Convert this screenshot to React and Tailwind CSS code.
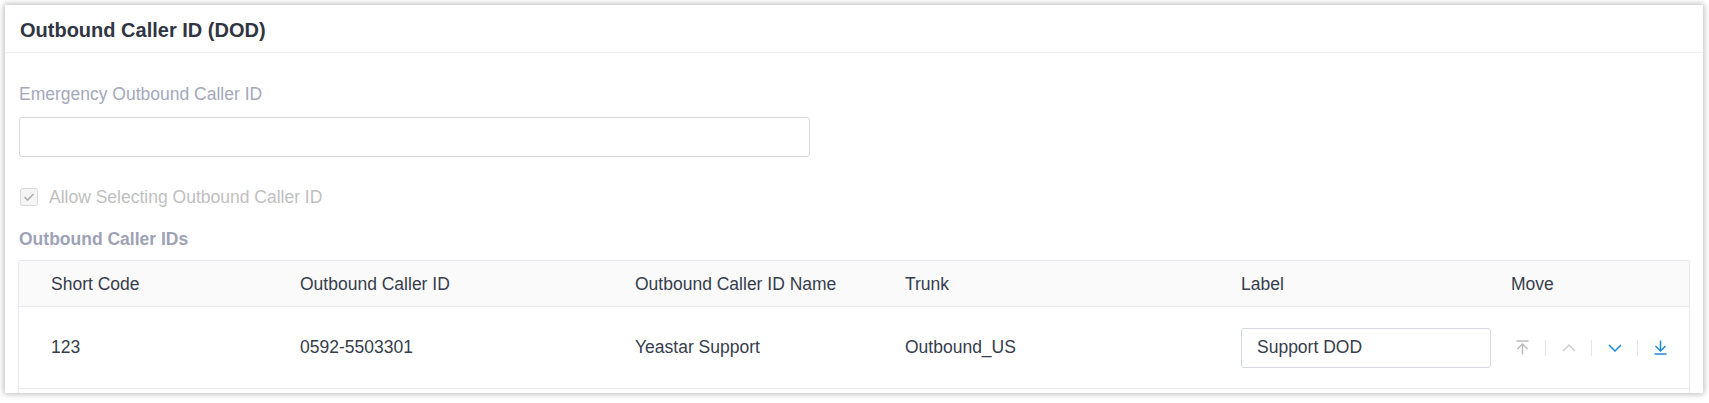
import { useState } from "react";

const columns = [
  { key: "code", title: "Short Code", width: "w-[261px] pl-[32px]" },
  { key: "callerId", title: "Outbound Caller ID", width: "w-[335px] pl-5" },
  { key: "name", title: "Outbound Caller ID Name", width: "w-[270px] pl-5" },
  { key: "trunk", title: "Trunk", width: "w-[336px] pl-5" },
  { key: "label", title: "Label", width: "w-[270px] pl-5" },
  { key: "move", title: "Move", width: "flex-1 pl-5" },
];

const rows = [
  { code: "123", callerId: "0592-5503301", name: "Yeastar Support", trunk: "Outbound_US", label: "Support DOD" },
];

export default function App() {
  return (
    <div className="h-[403px] w-[1709px] overflow-hidden bg-white font-['Liberation_Sans',Arial,sans-serif] text-[17.5px]">
      <section className="m-[5px] h-[388px] w-[1698px] overflow-hidden bg-white shadow-[0_0_6px_1px_rgba(0,0,0,0.28)]">
        <header className="flex h-[48px] items-center border-b border-[#eef0f3] px-[15px] pt-[2px]">
          <h1 className="text-[20px] font-bold text-[#2f3542]">Outbound Caller ID (DOD)</h1>
        </header>

        <div className="px-[14px] pt-[30px]">
          <label className="block leading-[22px] text-[#a4a8ba]">Emergency Outbound Caller ID</label>
          <input
            className="mt-3 block h-10 w-[791px] rounded-[3px] border border-[#d6d9e2] bg-white px-4 outline-none"
            defaultValue=""
          />

          <div className="mt-[29px] flex h-[22px] items-center gap-[11px] pl-[1px]">
            <span className="grid h-[18px] w-[18px] place-items-center rounded-[3px] border border-[#d9d9d9] bg-[#f5f5f5]">
              <svg width="12" height="10" viewBox="0 0 12 10" fill="none">
                <path d="M1.5 5 L4.6 8 L10.5 2" stroke="#b0b0b0" strokeWidth="1.7" />
              </svg>
            </span>
            <span className="leading-[22px] text-[#c0c0c0]">Allow Selecting Outbound Caller ID</span>
          </div>

          <h2 className="mt-5 leading-[22px] font-bold text-[#9da2b6]">Outbound Caller IDs</h2>

          <CallerTable />
        </div>
      </section>
    </div>
  );
}

function CallerTable() {
  const [labels, setLabels] = useState(rows.map((row) => row.label));

  return (
    <div className="-ml-px mt-[10px] w-[1672px] rounded-[2px] border border-[#e8e9ef] text-[#363d4c]">
      <div className="flex h-[46px] items-center border-b border-[#e8e9ef] bg-[#fafafb]">
        {columns.map((col) => (
          <div key={col.key} className={`${col.width} shrink-0 leading-[22px]`}>{col.title}</div>
        ))}
      </div>

      {rows.map((row, index) => (
        <div key={row.code} className="flex h-[82px] items-center border-b border-[#e8e9ef]">
          <div className="w-[261px] shrink-0 pl-[32px]">{row.code}</div>
          <div className="w-[335px] shrink-0 pl-5">{row.callerId}</div>
          <div className="w-[270px] shrink-0 pl-5">{row.name}</div>
          <div className="w-[336px] shrink-0 pl-5">{row.trunk}</div>
          <div className="w-[270px] shrink-0 pl-5">
            <input
              className="block h-10 w-[250px] rounded-[3px] border border-[#d6d9e2] bg-white px-[15px] text-[#363d4c] outline-none"
              value={labels[index]}
              onChange={(event) => setLabels(labels.map((l, i) => (i === index ? event.target.value : l)))}
            />
          </div>
          <div className="flex flex-1 items-center pl-[25px]">
            <MoveControls />
          </div>
        </div>
      ))}
      <div className="h-[40px]" />
    </div>
  );
}

function MoveControls() {
  return (
    <div className="flex items-center">
      <button type="button" className="grid w-[13px] place-items-center" aria-label="Move to top">
        <svg width="13" height="15" viewBox="0 0 13 15" fill="none" stroke="#bdbdbd" strokeWidth="1.5">
          <path d="M0.5 1 H12.5" />
          <path d="M6.5 4 V14.5" />
          <path d="M1.5 9 L6.5 4 L11.5 9" />
        </svg>
      </button>
      <span className="mx-4 h-4 w-px bg-[#e4e6ec]" />
      <button type="button" className="grid w-[13px] place-items-center" aria-label="Move up">
        <svg width="14" height="8" viewBox="0 0 14 8" fill="none" stroke="#cbcbcb" strokeWidth="1.3">
          <path d="M1 7 L7 1 L13 7" />
        </svg>
      </button>
      <span className="mx-4 h-4 w-px bg-[#e4e6ec]" />
      <button type="button" className="grid w-[13px] place-items-center" aria-label="Move down">
        <svg width="14" height="8" viewBox="0 0 14 8" fill="none" stroke="#1f88da" strokeWidth="1.5">
          <path d="M1 1 L7 7 L13 1" />
        </svg>
      </button>
      <span className="mx-4 h-4 w-px bg-[#e4e6ec]" />
      <button type="button" className="grid w-[13px] place-items-center" aria-label="Move to bottom">
        <svg width="13" height="15" viewBox="0 0 13 15" fill="none" stroke="#1f88da" strokeWidth="1.5">
          <path d="M6.5 0.5 V11" />
          <path d="M1.5 6 L6.5 11 L11.5 6" />
          <path d="M0.5 14 H12.5" />
        </svg>
      </button>
    </div>
  );
}
